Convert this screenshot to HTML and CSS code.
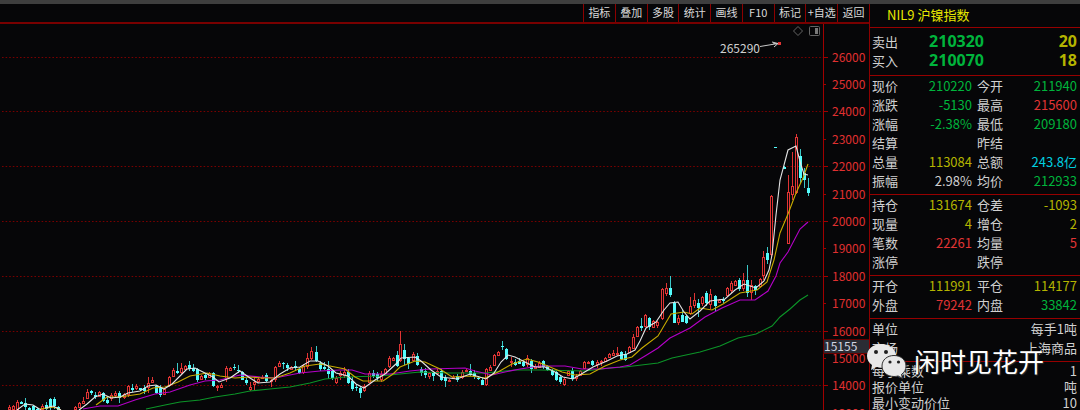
FILE: index.html
```html
<!DOCTYPE html>
<html lang="zh-CN">
<head>
	<meta charset="utf-8">
	<meta name="viewport" content="width=device-width">
	<title>NIL9 沪镍指数</title>
	<link rel="stylesheet" href="styles.css">
</head>
<body>
	<div class="terminal">
		<main class="main">
			<nav class="toolbar">
				<button type="button">指标</button>
				<button type="button">叠加</button>
				<button type="button">多股</button>
				<button type="button">统计</button>
				<button type="button">画线</button>
				<button type="button">F10</button>
				<button type="button">标记</button>
				<button type="button">+自选</button>
				<button type="button">返回</button>
			</nav>
			<svg class="chart" viewBox="0 24 869 386">
				<g id="grid"></g>
				<path class="axis" d="M823.5 23V410"/>
				<g id="candles"></g>
				<g id="averages"></g>
				<g id="labels"></g>

				<!-- highest price marker -->
				<text class="peak" x="720" y="53">265290</text>
				<path class="arrow" d="M760 46.5L778 43.5M772 42l6 1.5-4 3.5M773 43l4 1"/>
				<rect class="peak-dot" x="778" y="42" width="3" height="3"/>

				<path class="tool" d="M798 26.5l4.500 4.500-4.500 4.500-4.500-4.500z"/>
				<rect class="tool" x="809.500" y="26.500" width="10" height="9" rx="1"/>
				<rect class="tool-fill" x="815" y="28" width="3" height="6"/>

				<!-- cursor price -->
				<rect class="cursor" x="823.500" y="339.500" width="46" height="14"/>
				<text class="cursor-text" x="824" y="351">15155</text>
			</svg>
		</main>

		<aside class="quote">
			<h1>NIL9 沪镍指数</h1>
			<table class="bids">
				<tr><th>卖出</th><td class="green">210320</td><td class="yellow">20</td></tr>
				<tr><th>买入</th><td class="green">210070</td><td class="yellow">18</td></tr>
			</table>
			<table>
				<tr><th>现价</th><td class="green">210220</td><th>今开</th><td class="green">211940</td></tr>
				<tr><th>涨跌</th><td class="green">-5130</td><th>最高</th><td class="red">215600</td></tr>
				<tr><th>涨幅</th><td class="green">-2.38%</td><th>最低</th><td class="green">209180</td></tr>
				<tr><th>结算</th><td></td><th>昨结</th><td></td></tr>
				<tr><th>总量</th><td class="yellow">113084</td><th>总额</th><td class="cyan">243.8亿</td></tr>
				<tr><th>振幅</th><td>2.98%</td><th>均价</th><td class="green">212933</td></tr>
			</table>
			<table>
				<tr><th>持仓</th><td class="yellow">131674</td><th>仓差</th><td class="yellow">-1093</td></tr>
				<tr><th>现量</th><td class="yellow">4</td><th>增仓</th><td class="yellow">2</td></tr>
				<tr><th>笔数</th><td class="red">22261</td><th>均量</th><td class="red">5</td></tr>
				<tr><th>涨停</th><td></td><th>跌停</th><td></td></tr>
			</table>
			<table>
				<tr><th>开仓</th><td class="yellow">111991</td><th>平仓</th><td class="yellow">114177</td></tr>
				<tr><th>外盘</th><td class="red">79242</td><th>内盘</th><td class="green">33842</td></tr>
			</table>
			<table class="wide">
				<tr><th>单位</th><td>每手1吨</td></tr>
				<tr><th>市场</th><td>上海商品</td></tr>
			</table>
			<table class="wide tight">
				<tr><th>每手乘数</th><td>1</td></tr>
				<tr><th>报价单位</th><td>吨</td></tr>
				<tr><th>最小变动价位</th><td>10</td></tr>
			</table>
		</aside>

		<div class="watermark">
			<svg viewBox="0 0 42 36" width="42" height="36">
				<path class="bubble" d="M15 1C7 1 1 6 1 13c0 4 2 7 5 9l-1 5 5-3c2 .6 3 .8 6 .8 8 0 14-5 14-12S23 1 15 1z"/>
				<circle class="eye" cx="10" cy="9" r="2"/>
				<circle class="eye" cx="20" cy="9" r="2"/>
				<path class="bubble front" d="M28 12.500c-7 0-12 4.500-12 10.500s5 10.500 12 10.500c2 0 3-.3 4-.6l4.500 2.500-1-4c3-2 4.500-5 4.500-8.400 0-6-5-10.500-12-10.500z"/>
				<circle class="eye" cx="24" cy="19" r="1.600"/>
				<circle class="eye" cx="32.500" cy="19" r="1.600"/>
			</svg>
			<span>闲时见花开</span>
		</div>
	</div>
	<script src="chart.js"></script>
</body>
</html>
```
FILE: styles.css
```css
body {
	margin: 0;
	background-color: #060608;
	color: #d0d0d0;
	font-family: "Noto Sans CJK SC", "Noto Sans", sans-serif;
	font-size: 13px;
	overflow: hidden;
}

.terminal {
	position: relative;
	display: grid;
	grid-template-columns: minmax(0, 1fr) 211px;
	height: 100vh;
	box-sizing: border-box;
	border-top: 4px solid #3e3e3e;
	overflow: hidden;
}

/* Toolbar
 * ======= */

.toolbar {
	display: grid;
	grid-template-columns: repeat(9, 1fr);
	width: 286px;
	height: 18px;
	margin-left: auto;
}

.main {
	min-width: 0;
}

.toolbar button {
	border: 0 none;
	border-left: 1px solid #8c0000;
	padding: 0 0 2px;
	background: none;
	color: #d8d8d8;
	font-family: inherit;
	font-size: 11px;
	line-height: 16px;
	white-space: nowrap;
}

/* Chart
 * ===== */

.chart {
	display: block;
	width: 100%;
	border-top: 2px solid #780000;
	box-sizing: content-box;
}

.chart text {
	font-size: 12px;
}

.axis, .tick {
	stroke: #a00000;
	fill: none;
}

.gridline {
	stroke: #780000;
	stroke-dasharray: 1.6 2;
}

.label {
	fill: #e03030;
}

.up {
	stroke: #e03434;
	fill: #060608;
}

.down {
	stroke: none;
	fill: #54fcfc;
}

.wick-down {
	stroke: #3cc8c8;
}

.ma {
	fill: none;
	stroke-width: 1.1;
}

.ma5 { stroke: #e4e4e4; }
.ma10 { stroke: #c8ac00; }
.ma20 { stroke: #b400c8; }
.ma60 { stroke: #0c9428; }

.peak {
	fill: #d0d0d0;
}

.arrow {
	stroke: #c8c8c8;
	fill: none;
}

.peak-dot {
	fill: #e03434;
}

.tool {
	stroke: #646464;
	fill: none;
}

.tool-fill {
	fill: #787878;
}

.cursor {
	fill: #2a2c34;
	stroke: #640000;
}

.cursor-text {
	fill: #d0d4e0;
}

/* Quote panel
 * =========== */

.quote {
	border-left: 1px solid #8c0000;
	overflow: hidden;
}

.quote h1 {
	margin: 0;
	padding: 0 0 2px 17px;
	color: #e8e800;
	font-size: 13px;
	font-weight: normal;
	line-height: 21px;
}

.quote table {
	width: 100%;
	table-layout: fixed;
	border-collapse: separate;
	border-spacing: 0;
	border-top: 1px solid #960000;
	padding: 0 0 4px;
}

.quote th {
	width: 29px;
	padding: 0 0 0 2px;
	font-weight: normal;
	text-align: left;
	line-height: 19px;
	white-space: nowrap;
}

.quote td {
	padding: 0 3px 0 0;
	text-align: right;
	line-height: 19px;
	white-space: nowrap;
}

.quote .bids {
	padding: 4px 0 5px;
}

.quote .bids td {
	font-family: "Noto Sans", sans-serif;
	font-size: 16px;
	font-weight: bold;
}

.quote .bids td:nth-child(2) {
	width: 83px;
}

.quote .wide th {
	width: 90px;
}

.quote .tight {
	padding-top: 1px;
}

.quote .tight th, .quote .tight td {
	line-height: 16px;
}

.green { color: #00b43c; }
.red { color: #e03434; }
.yellow { color: #b4b400; }
.cyan { color: #00d0e0; }

/* Watermark
 * ========= */

.watermark {
	position: absolute;
	right: 36px;
	bottom: 31px;
	display: flex;
	align-items: center;
	gap: 6px;
	color: #ffffff;
	font-size: 26px;
	line-height: 36px;
	text-shadow: 1px 1px 1px #303030;
}

.bubble {
	fill: #e8e8e8;
}

.front {
	stroke: #303030;
}

.eye {
	fill: #202020;
}
```
FILE: chart.js
```js
const SVG = 'http://www.w3.org/2000/svg';

// x, high, body top, body bottom, low, direction (1 = up)
const candles = [
	[9,405,407,410,410,1],[13,405,406,410,410,1],[17,400,402,410,410,1],[21,401,402,404,404,0],[25,398,403,407,410,0],
	[29,407,408,410,410,0],[33,405,406,410,410,0],[37,408,409,410,410,0],[42,404,406,410,410,1],[46,402,405,409,410,0],
	[50,398,399,408,410,0],[54,397,399,406,409,0],[58,406,407,410,410,0],[75,406,407,410,410,1],[79,402,403,408,408,1],
	[83,397,401,404,404,1],[87,389,392,399,399,1],[91,390,391,393,395,0],[95,392,395,397,399,0],[99,391,392,397,397,1],
	[103,392,393,401,402,0],[107,396,400,403,404,0],[111,393,395,399,401,1],[115,391,393,396,398,1],[119,391,393,398,403,0],
	[124,393,394,398,399,1],[128,385,386,395,397,1],[132,384,388,390,392,0],[136,384,386,389,390,1],[140,388,388,390,391,0],
	[144,385,388,391,394,0],[148,377,383,388,393,1],[152,377,380,383,383,1],[156,385,386,393,394,0],[160,385,388,395,397,0],
	[164,388,389,395,395,1],[169,376,377,386,387,1],[173,368,370,377,377,1],[177,363,371,373,374,0],[181,363,368,373,374,1],
	[185,365,366,370,371,1],[189,361,365,369,371,0],[193,364,368,371,372,0],[197,368,369,380,382,0],[201,375,376,380,380,1],
	[205,373,375,378,380,0],[209,372,373,378,378,1],[213,372,373,386,387,0],[217,385,386,388,391,1],[221,383,385,388,388,1],
	[226,366,368,379,382,1],[230,367,368,371,371,1],[234,364,367,368,370,0],[238,365,370,371,373,0],[242,371,372,380,380,0],
	[246,378,380,383,385,0],[250,382,387,390,391,1],[254,377,382,385,390,1],[258,377,379,382,383,1],[262,375,377,379,379,1],
	[266,373,375,381,382,0],[271,379,380,382,387,1],[275,366,367,380,382,1],[279,361,363,367,367,1],[283,362,363,364,369,0],
	[287,363,365,368,371,0],[291,366,367,370,370,1],[295,361,366,368,371,0],[299,367,369,373,374,0],[303,364,366,373,374,1],
	[307,353,358,367,369,1],[311,347,351,359,360,1],[316,346,352,361,362,0],[320,361,363,369,371,0],[324,362,367,369,370,0],
	[328,361,369,374,379,0],[332,370,371,378,380,0],[336,376,378,383,384,1],[340,371,373,376,380,1],[344,367,372,376,378,1],
	[348,369,372,383,384,0],[352,377,381,389,391,0],[356,384,387,388,391,0],[360,386,388,393,398,0],[364,384,386,391,392,1],
	[369,371,373,383,383,1],[373,370,373,376,378,0],[377,372,374,378,381,0],[381,371,374,380,382,1],[385,368,369,374,374,1],
	[389,356,358,367,368,1],[393,357,358,361,361,1],[397,351,355,366,367,0],[400,331,344,361,362,1],[404,344,350,359,365,0],
	[408,357,358,364,369,0],[413,352,354,361,361,1],[417,353,356,365,366,0],[421,367,369,373,376,0],[425,368,371,375,378,0],
	[429,372,373,377,379,1],[433,372,373,376,381,0],[437,369,371,374,375,1],[441,369,371,380,381,0],[445,375,378,381,387,0],
	[449,379,380,382,382,1],[453,375,377,379,379,1],[457,374,376,380,382,0],[462,370,372,378,379,1],[466,369,370,372,372,1],
	[470,364,371,375,376,0],[474,370,373,377,379,0],[478,376,378,379,380,0],[482,378,380,385,385,0],[486,368,369,385,386,1],
	[490,365,367,371,371,1],[494,354,355,366,366,1],[498,351,352,356,356,1],[502,341,346,347,350,0],[506,348,349,359,360,0],
	[511,357,361,363,367,1],[515,359,362,365,366,0],[519,358,361,364,364,0],[523,360,362,366,367,0],[527,355,358,365,367,1],
	[531,359,361,369,373,0],[535,364,366,369,369,1],[539,361,363,368,368,1],[543,360,361,367,369,0],[547,365,366,370,371,0],
	[552,369,371,375,376,0],[556,371,372,380,381,0],[560,375,377,382,384,0],[564,377,379,385,386,1],[568,370,371,376,376,1],
	[572,368,371,379,381,0],[576,374,376,379,381,1],[580,370,371,376,376,1],[584,361,362,369,369,1],[588,361,362,364,364,1],
	[592,360,361,365,366,0],[597,360,362,365,368,1],[601,360,361,363,366,1],[605,357,358,362,362,1],[609,353,354,358,358,1],
	[613,350,353,356,356,1],[617,347,353,354,356,1],[621,351,352,359,360,0],[625,351,354,360,361,0],[629,346,347,353,353,1],
	[633,334,337,349,349,1],[637,326,327,337,337,1],[641,318,326,328,331,0],[645,314,315,327,327,1],[649,317,318,327,330,0],
	[653,320,321,328,328,1],[657,321,322,326,328,1],[662,288,289,319,320,1],[666,283,288,294,296,1],[670,276,288,295,297,0],
	[674,301,303,323,323,0],[678,315,318,323,325,1],[682,310,315,322,322,0],[686,315,316,323,324,0],[690,297,306,314,315,1],
	[694,293,300,306,308,1],[698,299,303,308,317,0],[702,296,297,304,306,1],[706,291,293,303,306,0],[710,289,294,305,309,1],
	[715,295,296,306,311,0],[719,299,300,303,303,1],[723,297,299,301,303,0],[727,287,288,296,296,1],[731,281,283,291,293,1],
	[735,280,281,286,286,1],[739,278,280,289,291,0],[743,273,280,289,291,1],[747,265,280,293,297,0],[751,280,285,293,300,1],
	[755,285,286,290,295,0],[760,278,279,287,287,1],[763,251,257,276,280,1],[767,247,253,260,264,0],[771,195,196,255,257,1],
	[775,147,147,148,148,0],[784,166,167,169,169,0],[788,175,192,244,244,1],[792,152,186,195,200,1],[796,134,137,193,194,1],
	[800,149,156,178,183,0],[804,168,173,180,188,0],[808,178,188,193,196,0]
];

const averages = {
	ma60: ['146,409 165,405 180,402 200,400 215,397 235,394 250,391 270,389 290,387 310,383 325,379 345,377 380,376 400,374 420,372 450,373 485,373 515,370 540,370 585,371 610,368 625,367 658,363 672,358 700,352 720,346 738,338 756,334 772,326 780,317 790,309 800,300 808,295'],
	ma20: ['83,409 100,406 118,406 135,400 155,394 170,392 190,385 205,381 220,380 240,375 260,377 275,378 300,373 320,371 340,370 352,370 365,374 390,374 410,371 430,369 465,368 475,371 492,375 505,372 520,369 540,366 565,366 582,369 600,369 620,367 630,365 645,356 658,348 670,338 690,328 705,317 722,308 740,300 755,300 768,291 776,276 780,263 788,252 800,229 808,222'],
	ma10: [
		'40,409 54,407 61,410',
		'96,405 107,397 120,397 140,394 153,388 165,387 178,382 190,376 207,373 220,376 235,378 250,377 262,378 275,378 290,373 305,366 320,364 335,367 345,369 355,377 363,381 383,381 393,374 400,367 415,361 425,362 440,369 452,377 470,376 485,378 498,372 512,364 527,359 538,362 550,367 562,372 575,375 590,374 605,366 620,360 632,357 642,348 658,336 671,314 684,312 692,314 700,308 712,310 723,304 740,293 757,290 767,282 774,260 780,233 788,214 796,193 803,178 808,164'
	],
	ma5: [
		'17,410 25,404 33,405 41,410',
		'45,408 53,406 61,410',
		'79,410 87,404 95,397 103,394 111,398 120,397 128,393 140,391 148,386 156,385 164,389 172,384 180,376 187,369 195,368 205,373 213,377 219,382 230,378 240,371 250,378 258,383 270,382 280,374 290,368 300,367 310,361 318,361 328,366 336,373 348,376 356,384 364,388 375,380 385,374 397,363 401,358 415,357 421,361 431,370 441,377 457,379 470,374 486,379 494,373 501,362 508,355 515,357 525,362 535,367 545,367 555,372 563,377 573,379 583,373 593,367 607,361 617,356 627,354 635,350 640,341 646,328 656,322 664,310 670,303 678,302 684,312 690,319 700,311 710,301 725,299 735,290 744,284 756,288 764,281 769,270 772,255 776,215 780,180 788,150 796,146 801,165 804,174 808,175'
	]
};

function draw(parent, tag, attrs, text) {
	const el = document.createElementNS(SVG, tag);
	for (const name in attrs) {
		el.setAttribute(name, attrs[name]);
	}
	if (text) {
		el.textContent = text;
	}
	document.getElementById(parent).appendChild(el);
}

// price scale, dotted line on every second step
for (let price = 26000; price >= 13000; price -= 1000) {
	const y = Math.floor(57 + (26000 - price) * 0.0274) + 0.5;
	const major = price % 2000 === 0;
	if (major) {
		draw('grid', 'path', { class: 'gridline', d: `M2 ${y}H823` });
	}
	draw('grid', 'path', { class: 'tick', d: `M824 ${y}h${major ? 4 : 2}` });
	draw('labels', 'text', { class: 'label', x: 832, y: y + 4 }, String(price));
}

candles.forEach(([x, high, top, bottom, low, up]) => {
	const mid = x + 0.5;
	draw('candles', 'path', { class: up ? 'up' : 'wick-down', d: `M${mid} ${high}V${low}` });
	if (up) {
		draw('candles', 'rect', { class: 'up', x: x - 0.5, y: top + 0.5, width: 2, height: Math.max(bottom - top - 1, 1) });
	} else {
		draw('candles', 'rect', { class: 'down', x: x - 1, y: top, width: 3, height: bottom - top });
	}
});

for (const name in averages) {
	averages[name].forEach(points => {
		draw('averages', 'polyline', { class: `ma ${name}`, points: points });
	});
}
```
